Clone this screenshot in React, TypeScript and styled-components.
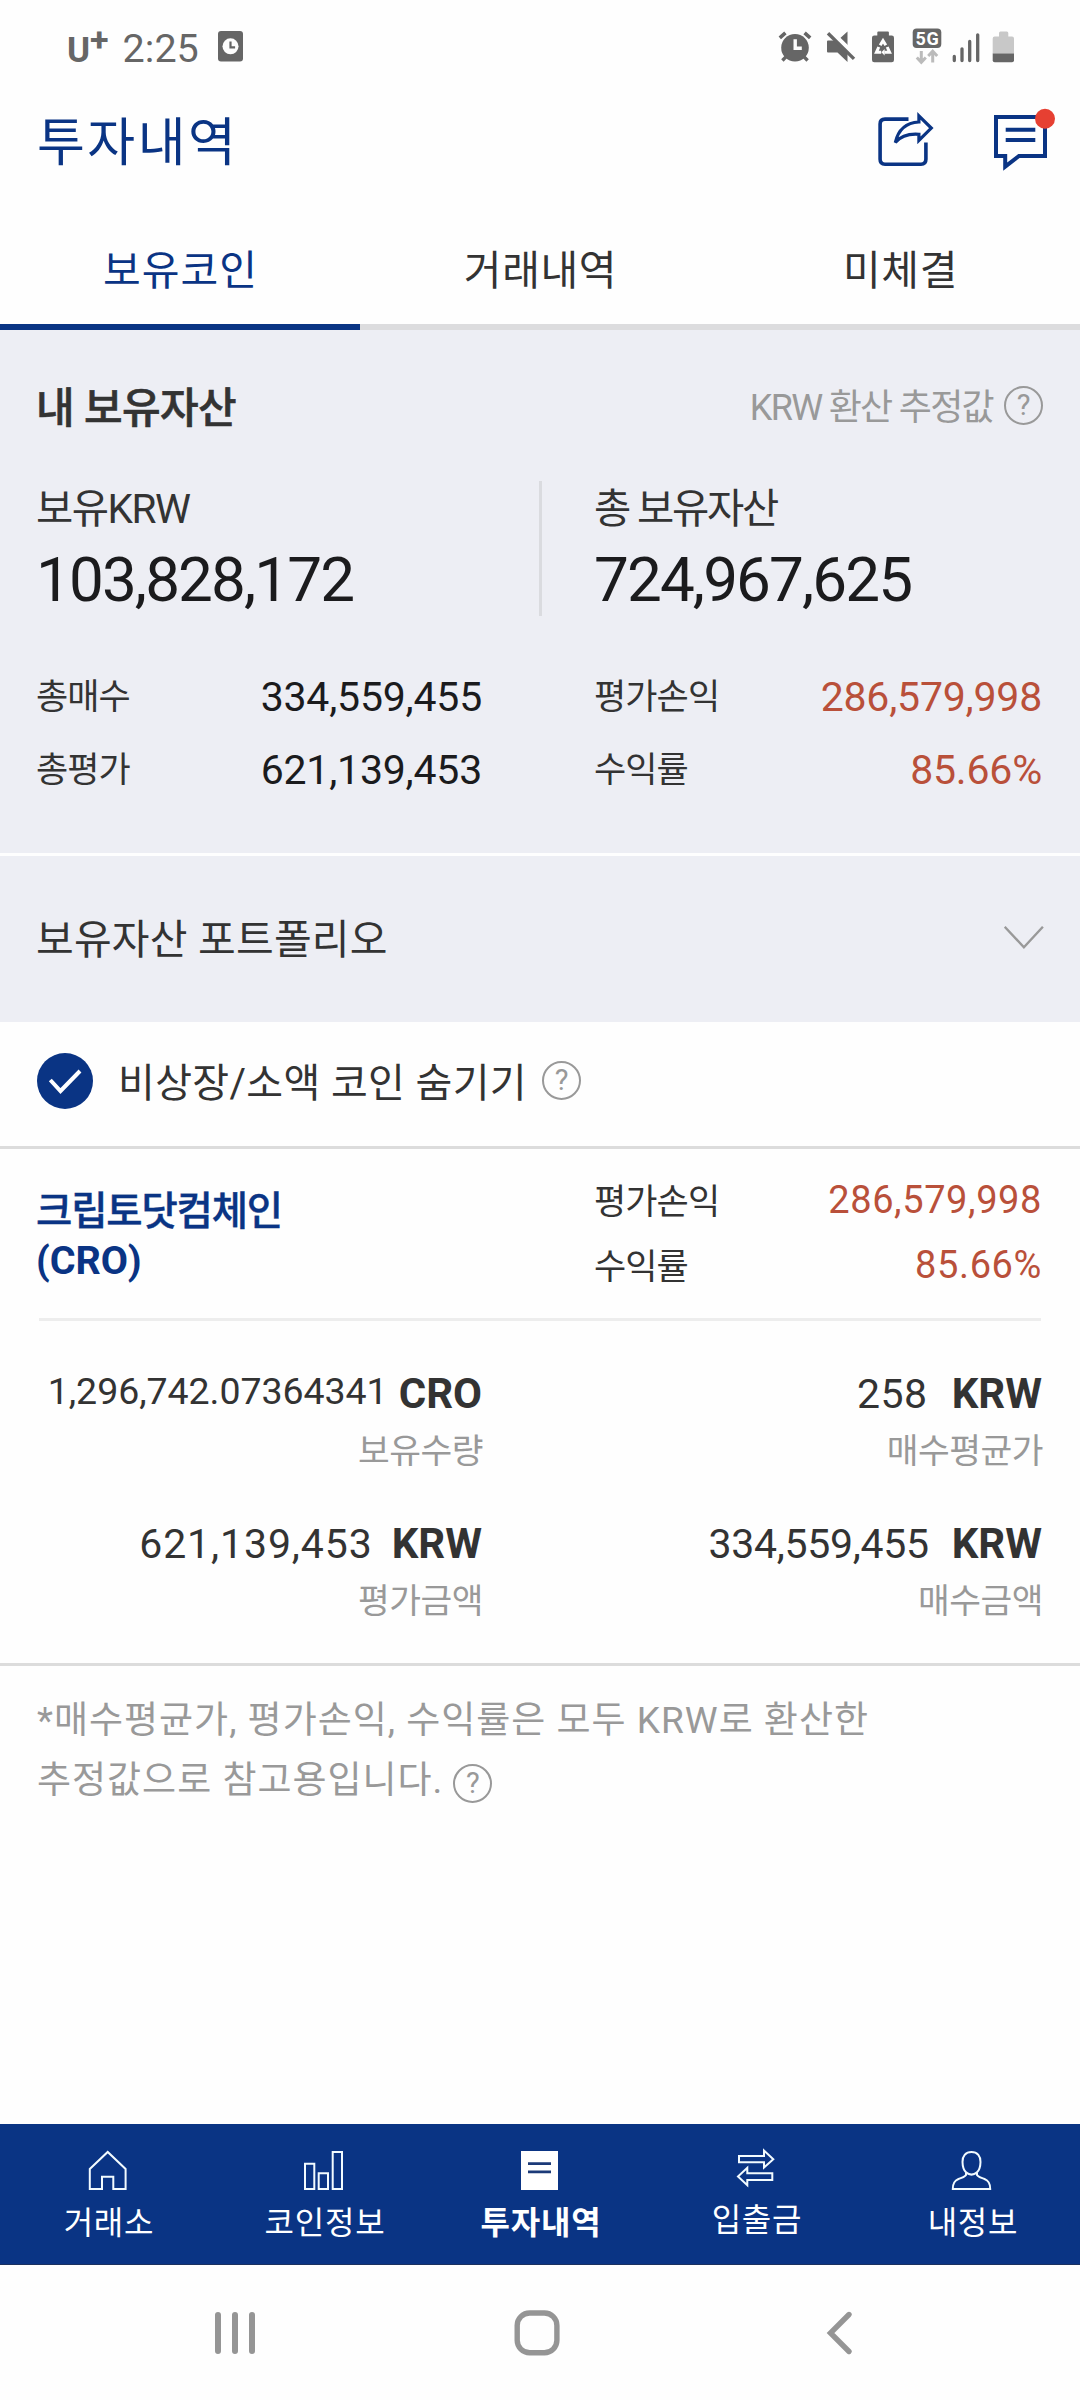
import React from 'react';
import styled, { createGlobalStyle } from 'styled-components';

const navy = '#0a3484';
const ink = '#333333';
const muted = '#999999';
const gain = '#b9503a';
const panel = '#edeef4';

const GlobalStyle = createGlobalStyle`
  * { box-sizing: border-box; }
  body {
    margin: 0;
    background: #fefefe;
    font-family: Roboto, "Noto Sans CJK KR", sans-serif;
    color: ${ink};
  }
  svg { display: block; flex: none; }
`;

const Screen = styled.div`
  display: flex;
  flex-direction: column;
  width: 1080px;
  height: 2400px;
  background: #fefefe;
  overflow: hidden;
  white-space: nowrap;
`;

/* ---------- status bar ---------- */

const StatusBar = styled.div`
  display: flex;
  justify-content: space-between;
  align-items: center;
  height: 93px;
  padding: 0 65px 0 67px;
  color: #666666;
`;

const StatusGroup = styled.div`
  display: flex;
  align-items: center;
`;

const CarrierLetter = styled.span`
  padding-top: 8px;
  font-size: 35px;
  font-weight: 700;
  line-height: 40px;
`;

const CarrierPlus = styled.span`
  padding-bottom: 15px;
  font-size: 34px;
  font-weight: 700;
  line-height: 40px;
`;

const Clock = styled.span`
  padding-top: 4px;
  margin: 0 19px 0 14px;
  font-size: 39.5px;
  line-height: 46px;
`;

/* ---------- header and tabs ---------- */

const Header = styled.header`
  display: flex;
  align-items: center;
  justify-content: space-between;
  height: 100px;
  padding: 0 20px 0 37px;
`;

const Title = styled.h1`
  margin: 0;
  padding-top: 2px;
  font-size: 52px;
  font-weight: 400;
  line-height: 60px;
  letter-spacing: 2.5px;
  color: ${navy};
`;

const HeaderActions = styled.div`
  display: flex;
  gap: 45px;
`;

const Tabs = styled.nav`
  display: grid;
  grid-template-columns: repeat(3, 1fr);
  height: 137px;
`;

const Tab = styled.div<{ $active?: boolean }>`
  display: flex;
  align-items: center;
  justify-content: center;
  padding: 24px 0 0 1px;
  border-bottom: 6px solid ${p => (p.$active ? navy : '#dcdcde')};
  font-size: 41px;
  line-height: 50px;
  letter-spacing: ${p => (p.$active ? 1 : 0.6)}px;
  color: ${p => (p.$active ? navy : ink)};
`;

/* ---------- asset summary ---------- */

const Summary = styled.section`
  height: 523px;
  padding: 38px 37px 0 36px;
  background: ${panel};
`;

const SummaryHead = styled.div`
  display: flex;
  align-items: center;
  justify-content: space-between;
  height: 80px;
`;

const SummaryTitle = styled.h2`
  margin: 0;
  padding-top: 1px;
  font-size: 42px;
  font-weight: 500;
  line-height: 50px;
  letter-spacing: -0.6px;
  -webkit-text-stroke: 0.6px currentColor;
`;

const Estimate = styled.div`
  display: flex;
  align-items: center;
  gap: 11px;
  font-size: 36px;
  line-height: 44px;
  letter-spacing: -1.7px;
  color: ${muted};
`;

const HelpWrap = styled.span<{ $lift: number }>`
  display: flex;
  flex: none;
  padding-bottom: ${p => Math.max(p.$lift, 0)}px;
  padding-top: ${p => Math.max(-p.$lift, 0)}px;
`;

const HelpCircle = styled.span`
  display: flex;
  align-items: center;
  justify-content: center;
  width: 39px;
  height: 39px;
  border: 2px solid ${muted};
  border-radius: 50%;
  font-size: 29px;
  font-weight: 400;
  line-height: 35px;
  letter-spacing: 0;
  color: ${muted};
`;

const Balances = styled.div`
  display: grid;
  grid-template-columns: 503px 3px 1fr;
  height: 135px;
  margin-top: 33px;
`;

const Divider = styled.div`
  background: #dadbdf;
`;

const Balance = styled.div<{ $indent?: boolean }>`
  padding-left: ${p => (p.$indent ? 52 : 0)}px;
`;

const BalanceLabel = styled.div<{ $spacing: number }>`
  font-size: 40.5px;
  line-height: 57px;
  letter-spacing: ${p => p.$spacing}px;
`;

const BalanceValue = styled.div`
  margin-top: 6px;
  font-size: 62px;
  line-height: 72px;
  letter-spacing: -1.9px;
  color: #1b1b1d;
`;

const Columns = styled.div<{ $top: number }>`
  display: grid;
  grid-template-columns: 446px 448px;
  column-gap: 112px;
  padding-top: ${p => p.$top}px;
`;

const StatRow = styled.div<{ $height: number }>`
  display: flex;
  align-items: center;
  justify-content: space-between;
  height: ${p => p.$height}px;
`;

const StatLabel = styled.span`
  padding-top: 1px;
  font-size: 35px;
  line-height: 44px;
  letter-spacing: -0.9px;
`;

const StatValue = styled.span<{ $gain?: boolean; $small?: boolean }>`
  padding-bottom: ${p => (p.$small ? 6 : 1)}px;
  font-size: ${p => (p.$small ? 38 : 41)}px;
  line-height: 48px;
  letter-spacing: ${p => (p.$small ? 0.6 : -0.2)}px;
  color: ${p => (p.$gain ? gain : '#1b1b1d')};
`;

/* ---------- portfolio and filter ---------- */

const Portfolio = styled.section`
  display: flex;
  align-items: center;
  justify-content: space-between;
  height: 166px;
  margin-top: 3px;
  padding: 0 36px;
  background: ${panel};
`;

const PortfolioTitle = styled.h2`
  margin: 0;
  padding-top: 2px;
  font-size: 41px;
  font-weight: 400;
  line-height: 50px;
  letter-spacing: 0.2px;
`;

const Filter = styled.div`
  display: flex;
  align-items: center;
  height: 127px;
  padding-left: 37px;
  border-bottom: 3px solid #dcdcdc;
`;

const FilterLabel = styled.span`
  margin: 0 15px 0 25px;
  font-size: 40px;
  line-height: 48px;
  letter-spacing: 0.36px;
`;

/* ---------- coin card ---------- */

const Coin = styled.section`
  height: 517px;
  border-bottom: 3px solid #dcdcdc;
`;

const CoinHead = styled.div`
  height: 169px;
  padding: 0 37px 0 36px;
`;

const CoinName = styled.div`
  margin-top: 17px;
  font-size: 39.5px;
  line-height: 49px;
  color: ${navy};
`;

const CoinNameLine = styled.div<{ $spacing: number; $weight: number }>`
  letter-spacing: ${p => p.$spacing}px;
  font-weight: ${p => p.$weight};
  -webkit-text-stroke: ${p => (p.$weight < 600 ? '0.4px' : '0')} currentColor;
`;

const Rule = styled.hr`
  height: 3px;
  margin: 0 39px;
  border: 0;
  background: #ededed;
`;

const CoinDetails = styled.div`
  padding: 0 37px 0 36px;
`;

const Detail = styled.div`
  display: flex;
  flex-direction: column;
  align-items: flex-end;
  height: 150px;
`;

const DetailFigure = styled.div<{ $gap: number }>`
  display: flex;
  align-items: center;
  gap: ${p => p.$gap}px;
  height: 56px;
`;

const Amount = styled.span<{ $size: number; $spacing: number; $lift: number }>`
  padding-bottom: ${p => p.$lift}px;
  font-size: ${p => p.$size}px;
  line-height: 50px;
  letter-spacing: ${p => p.$spacing}px;
`;

const Unit = styled.span`
  font-size: 42px;
  font-weight: 700;
  line-height: 50px;
`;

const DetailLabel = styled.span`
  margin: 5px -1px 0 0;
  font-size: 34.5px;
  line-height: 48px;
  letter-spacing: -0.5px;
  color: ${muted};
`;

const Note = styled.p`
  margin: 0;
  padding: 25px 37px 0 37px;
  font-size: 37px;
  line-height: 59.5px;
  letter-spacing: 1px;
  color: ${muted};
`;

const NoteLine = styled.span`
  display: flex;
  align-items: center;
  gap: 10px;
`;

/* ---------- bottom bars ---------- */

const BottomNav = styled.nav`
  display: grid;
  grid-template-columns: repeat(5, 1fr);
  height: 141px;
  margin-top: auto;
  background: ${navy};
  border-bottom: 1px solid #1b315f;
`;

const NavItem = styled.div`
  display: flex;
  flex-direction: column;
  align-items: center;
  padding-top: 24px;
  color: #ffffff;
`;

const NavLabel = styled.span<{ $active?: boolean; $raised?: boolean }>`
  margin-top: ${p => (p.$raised ? 6 : 9)}px;
  padding-left: 2px;
  font-size: 32px;
  font-weight: ${p => (p.$active ? 700 : 400)};
  line-height: 44px;
  letter-spacing: 0.8px;
`;

const SystemNav = styled.div`
  display: flex;
  align-items: center;
  justify-content: space-between;
  height: 135px;
  padding: 0 226px 0 213px;
`;

/* ---------- icons ---------- */

const Help = ({ lift }: { lift: number }) => (
  <HelpWrap $lift={lift}><HelpCircle>?</HelpCircle></HelpWrap>
);

const BadgeText = styled.text`
  font: 700 18px Roboto, sans-serif;
  fill: #ffffff;
`;

const AppClockIcon = () => (
  <svg width="26" height="32" viewBox="218 31 26 32">
    <rect x="218" y="31" width="25" height="30.5" rx="3" fill="#666" />
    <circle cx="230.5" cy="46.3" r="8" fill="#fefefe" />
    <path d="M230.5 41.5v5.8h4.6" fill="none" stroke="#666" strokeWidth="2.2" />
  </svg>
);

const StatusIcons = () => (
  <svg width="238" height="40" viewBox="777 26.5 238 40" fill="#666">
    <g>
      <circle cx="795" cy="47.3" r="13.8" />
      <path d="M779.8 37.4l5.6-5M810.2 37.4l-5.6-5" stroke="#666" strokeWidth="3.6" />
      <path d="M786.4 55.8l-4 4.2M803.6 55.8l4 4.2" stroke="#666" strokeWidth="3.4" />
      <path d="M795.2 38.8v9h6.6" fill="none" stroke="#fefefe" strokeWidth="3.4" />
    </g>
    <g>
      <path d="M828 40h9.5l10-9v30.5l-10-9.5H828a1 1 0 0 1-1-1V41a1 1 0 0 1 1-1z" />
      <path d="M829 29.5l28 27.5" stroke="#fefefe" strokeWidth="5" />
      <path d="M828 32.8l26 25.6" stroke="#666" strokeWidth="3.4" />
    </g>
    <g>
      <path d="M877.3 35v-3q0-1 1-1h9.6q1 0 1 1v3h2.8q2.3 0 2.3 2.3v22.1q0 2.3-2.3 2.3h-17.4q-2.3 0-2.3-2.3V37.3q0-2.3 2.3-2.3z" />
      <g fill="none" stroke="#fefefe" strokeWidth="3">
        <path d="M880.2 44.8l2.8-4.6 2.8 4.6" />
        <path d="M878.8 46.5l-2.4 5.3h4.8" />
        <path d="M887.2 46.5l2.4 5.3h-5.200" />
      </g>
      <path d="M884.6 48.5v6.400l-3.200-3.200z" fill="#fefefe" />
    </g>
    <g>
      <rect x="912.7" y="28" width="28.6" height="19.4" rx="4" />
      <BadgeText x="915.4" y="44.3" textLength="23.5">5G</BadgeText>
      <g fill="none" stroke="#bbb" strokeWidth="3">
        <path d="M921.3 50.5v11M916.8 57l4.5 4.8 4.5-4.8" />
        <path d="M932.7 62v-11M928.2 55.5l4.5-4.8 4.5 4.8" />
      </g>
    </g>
    <path d="M954.3 56v4M962 48.3v11.7M969.7 41v19M977.7 34.3v25.7" stroke="#666" strokeWidth="3.3" strokeLinecap="round" />
    <g>
      <path d="M999 36v-3.5q0-1.5 1.5-1.5h6.3q1.5 0 1.5 1.5V36h3.7q2 0 2 2v15.3h-21.3V38q0-2 2-2z" fill="#c8c8c8" />
      <path d="M992.7 53h21.3v6.7q0 2-2 2h-17.3q-2 0-2-2z" />
    </g>
  </svg>
);

const ShareIcon = () => (
  <svg width="70" height="70" viewBox="870 108 70 70" fill="none" stroke={navy} strokeWidth="3.6">
    <path d="M908.5 119.1H885q-4.9 0-4.9 4.9v35.3q0 4.9 4.9 4.9h36q4.9 0 4.9-4.900V142.5" />
    <path d="M918.9 115.8l12.4 12.3-12.4 12.4v-6.2c-11-.8-18.2 1.8-23.6 8.2 2.8-12.4 10.6-19.8 23.6-20.5z" strokeWidth="3.2" />
  </svg>
);

const ChatIcon = () => (
  <svg width="75" height="70" viewBox="985 108 75 70" fill="none" stroke={navy} strokeWidth="4">
    <path d="M996 117h49v39h-26l-13.8 10.6V156H996z" />
    <path d="M1005.7 129.7h29.6M1005.7 140h29.6" />
    <circle cx="1045" cy="118.7" r="10" fill="#e64032" stroke="none" />
  </svg>
);

const ChevronIcon = () => (
  <svg width="40" height="30" viewBox="1004 924 40 30" fill="none" stroke={muted} strokeWidth="2.4">
    <path d="M1004.7 926.8l19.2 20.5 19-20.5" />
  </svg>
);

const CheckIcon = () => (
  <svg width="56" height="62" viewBox="37 1053 56 62">
    <circle cx="65" cy="1081" r="28" fill={navy} />
    <path d="M50.3 1080l10.2 11 19.5-20" fill="none" stroke="#fff" strokeWidth="4" />
  </svg>
);

const NavIcon = ({ center, children }: { center: number; children: React.ReactNode }) => (
  <svg width="44" height="44" viewBox={`${center - 22} 2148 44 44`} fill="none" stroke="#f2fbff" strokeWidth="2">
    {children}
  </svg>
);

const HomeIcon = () => (
  <NavIcon center={108}>
    <path d="M89.8 2189V2169l17.9-17 17.9 17v20h-12.3v-12.3H102V2189z" />
  </NavIcon>
);

const BarsIcon = () => (
  <NavIcon center={324}>
    <path d="M305 2163.7h9.3V2189H305zM318.7 2173.3h9.3V2189h-9.3zM332.7 2152h9.3v37h-9.3z" />
  </NavIcon>
);

const DocumentIcon = () => (
  <NavIcon center={540}>
    <path d="M521 2151h37v39h-37z" fill="#fff" stroke="none" />
    <path d="M528 2163.6h23M528 2171.9h23" stroke="#1b3a78" strokeWidth="2.8" />
  </NavIcon>
);

const TransferIcon = () => (
  <NavIcon center={756}>
    <path d="M739 2156h25v-5.5l9.3 8.7-9.3 8.4v-5.3H739zM772.3 2173.3h-25v-5.5l-9.3 8.7 9.3 8.7v-5.2h25z" />
  </NavIcon>
);

const PersonIcon = () => (
  <NavIcon center={972}>
    <path d="M971.5 2152c6 0 9.200 4.200 9 10-.1 5-1.600 8.500-3.500 10.300v2.700c1 1.800 4.500 2.700 7.500 4 4 1.700 5.700 4 5.700 10h-37.400c0-6 1.700-8.300 5.700-10 3-1.300 6.500-2.200 7.500-4v-2.700c-1.900-1.800-3.400-5.300-3.500-10.300-.2-5.800 3-10 9-10zM966 2172.300c3.500 3 7.500 3 11 0" />
  </NavIcon>
);

const tabs = [
  { label: '보유코인', active: true },
  { label: '거래내역' },
  { label: '미체결' },
];

const navItems = [
  { label: '거래소', icon: <HomeIcon /> },
  { label: '코인정보', icon: <BarsIcon /> },
  { label: '투자내역', icon: <DocumentIcon />, active: true },
  { label: '입출금', icon: <TransferIcon />, raised: true },
  { label: '내정보', icon: <PersonIcon /> },
];

const details = [
  { amount: '1,296,742.07364341', unit: 'CRO', label: '보유수량', size: 37.5, spacing: -0.05, gap: 11, lift: 6 },
  { amount: '258', unit: 'KRW', label: '매수평균가', size: 41, spacing: 0.5, gap: 24, lift: 0 },
  { amount: '621,139,453', unit: 'KRW', label: '평가금액', size: 41, spacing: 0.9, gap: 19, lift: 0 },
  { amount: '334,559,455', unit: 'KRW', label: '매수금액', size: 41, spacing: -0.3, gap: 23, lift: 0 },
];

interface StatProps { label: string; value: string; height: number; gain?: boolean; small?: boolean }

const Stat = ({ label, value, height, gain: isGain, small }: StatProps) => (
  <StatRow $height={height}>
    <StatLabel>{label}</StatLabel>
    <StatValue $gain={isGain} $small={small}>{value}</StatValue>
  </StatRow>
);

export default function App() {
  return (
    <Screen>
      <GlobalStyle />
      <StatusBar>
        <StatusGroup>
          <CarrierLetter>U</CarrierLetter>
          <CarrierPlus>+</CarrierPlus>
          <Clock>2:25</Clock>
          <AppClockIcon />
        </StatusGroup>
        <StatusIcons />
      </StatusBar>

      <Header>
        <Title>투자내역</Title>
        <HeaderActions>
          <ShareIcon />
          <ChatIcon />
        </HeaderActions>
      </Header>

      <Tabs>
        {tabs.map(t => <Tab key={t.label} $active={t.active}>{t.label}</Tab>)}
      </Tabs>

      <Summary>
        <SummaryHead>
          <SummaryTitle>내 보유자산</SummaryTitle>
          <Estimate>
            KRW 환산 추정값
            <Help lift={5} />
          </Estimate>
        </SummaryHead>
        <Balances>
          <Balance>
            <BalanceLabel $spacing={-1.5}>보유KRW</BalanceLabel>
            <BalanceValue>103,828,172</BalanceValue>
          </Balance>
          <Divider />
          <Balance $indent>
            <BalanceLabel $spacing={-2.2}>총 보유자산</BalanceLabel>
            <BalanceValue>724,967,625</BalanceValue>
          </Balance>
        </Balances>
        <Columns $top={44.5}>
          <Stat label="총매수" value="334,559,455" height={73} />
          <Stat label="평가손익" value="286,579,998" height={73} gain />
          <Stat label="총평가" value="621,139,453" height={73} />
          <Stat label="수익률" value="85.66%" height={73} gain />
        </Columns>
      </Summary>

      <Portfolio>
        <PortfolioTitle>보유자산 포트폴리오</PortfolioTitle>
        <ChevronIcon />
      </Portfolio>

      <Filter>
        <CheckIcon />
        <FilterLabel>비상장/소액 코인 숨기기</FilterLabel>
        <Help lift={7} />
      </Filter>

      <Coin>
        <CoinHead>
          <Columns $top={21}>
            <CoinName>
              <CoinNameLine $spacing={-1.2} $weight={500}>크립토닷컴체인</CoinNameLine>
              <CoinNameLine $spacing={-0.1} $weight={700}>(CRO)</CoinNameLine>
            </CoinName>
            <div>
              <Stat label="평가손익" value="286,579,998" height={65} gain small />
              <Stat label="수익률" value="85.66%" height={65} gain small />
            </div>
          </Columns>
        </CoinHead>
        <Rule />
        <CoinDetails>
          <Columns $top={45}>
            {details.map(d => (
              <Detail key={d.label}>
                <DetailFigure $gap={d.gap}>
                  <Amount $size={d.size} $spacing={d.spacing} $lift={d.lift}>{d.amount}</Amount>
                  <Unit>{d.unit}</Unit>
                </DetailFigure>
                <DetailLabel>{d.label}</DetailLabel>
              </Detail>
            ))}
          </Columns>
        </CoinDetails>
      </Coin>

      <Note>
        <NoteLine>*매수평균가, 평가손익, 수익률은 모두 KRW로 환산한</NoteLine>
        <NoteLine>
          추정값으로 참고용입니다.
          <Help lift={-6.5} />
        </NoteLine>
      </Note>

      <BottomNav>
        {navItems.map(n => (
          <NavItem key={n.label}>
            {n.icon}
            <NavLabel $active={n.active} $raised={n.raised}>{n.label}</NavLabel>
          </NavItem>
        ))}
      </BottomNav>

      <SystemNav>
        <svg width="44" height="50" viewBox="213 2307 44 50" stroke="#959595" strokeWidth="6" strokeLinecap="round">
          <path d="M218 2314v36M235 2314v36M252 2314v36" />
        </svg>
        <svg width="50" height="50" viewBox="512 2307 50 50" fill="none" stroke="#959595" strokeWidth="5.4">
          <rect x="517.2" y="2312" width="39.7" height="39.7" rx="12.5" />
        </svg>
        <svg width="37" height="50" viewBox="817 2307 37 50" fill="none" stroke="#959595" strokeWidth="5.4" strokeLinecap="round">
          <path d="M849 2313.5l-18.5 18.5 18.5 18.500" />
        </svg>
      </SystemNav>
    </Screen>
  );
}
